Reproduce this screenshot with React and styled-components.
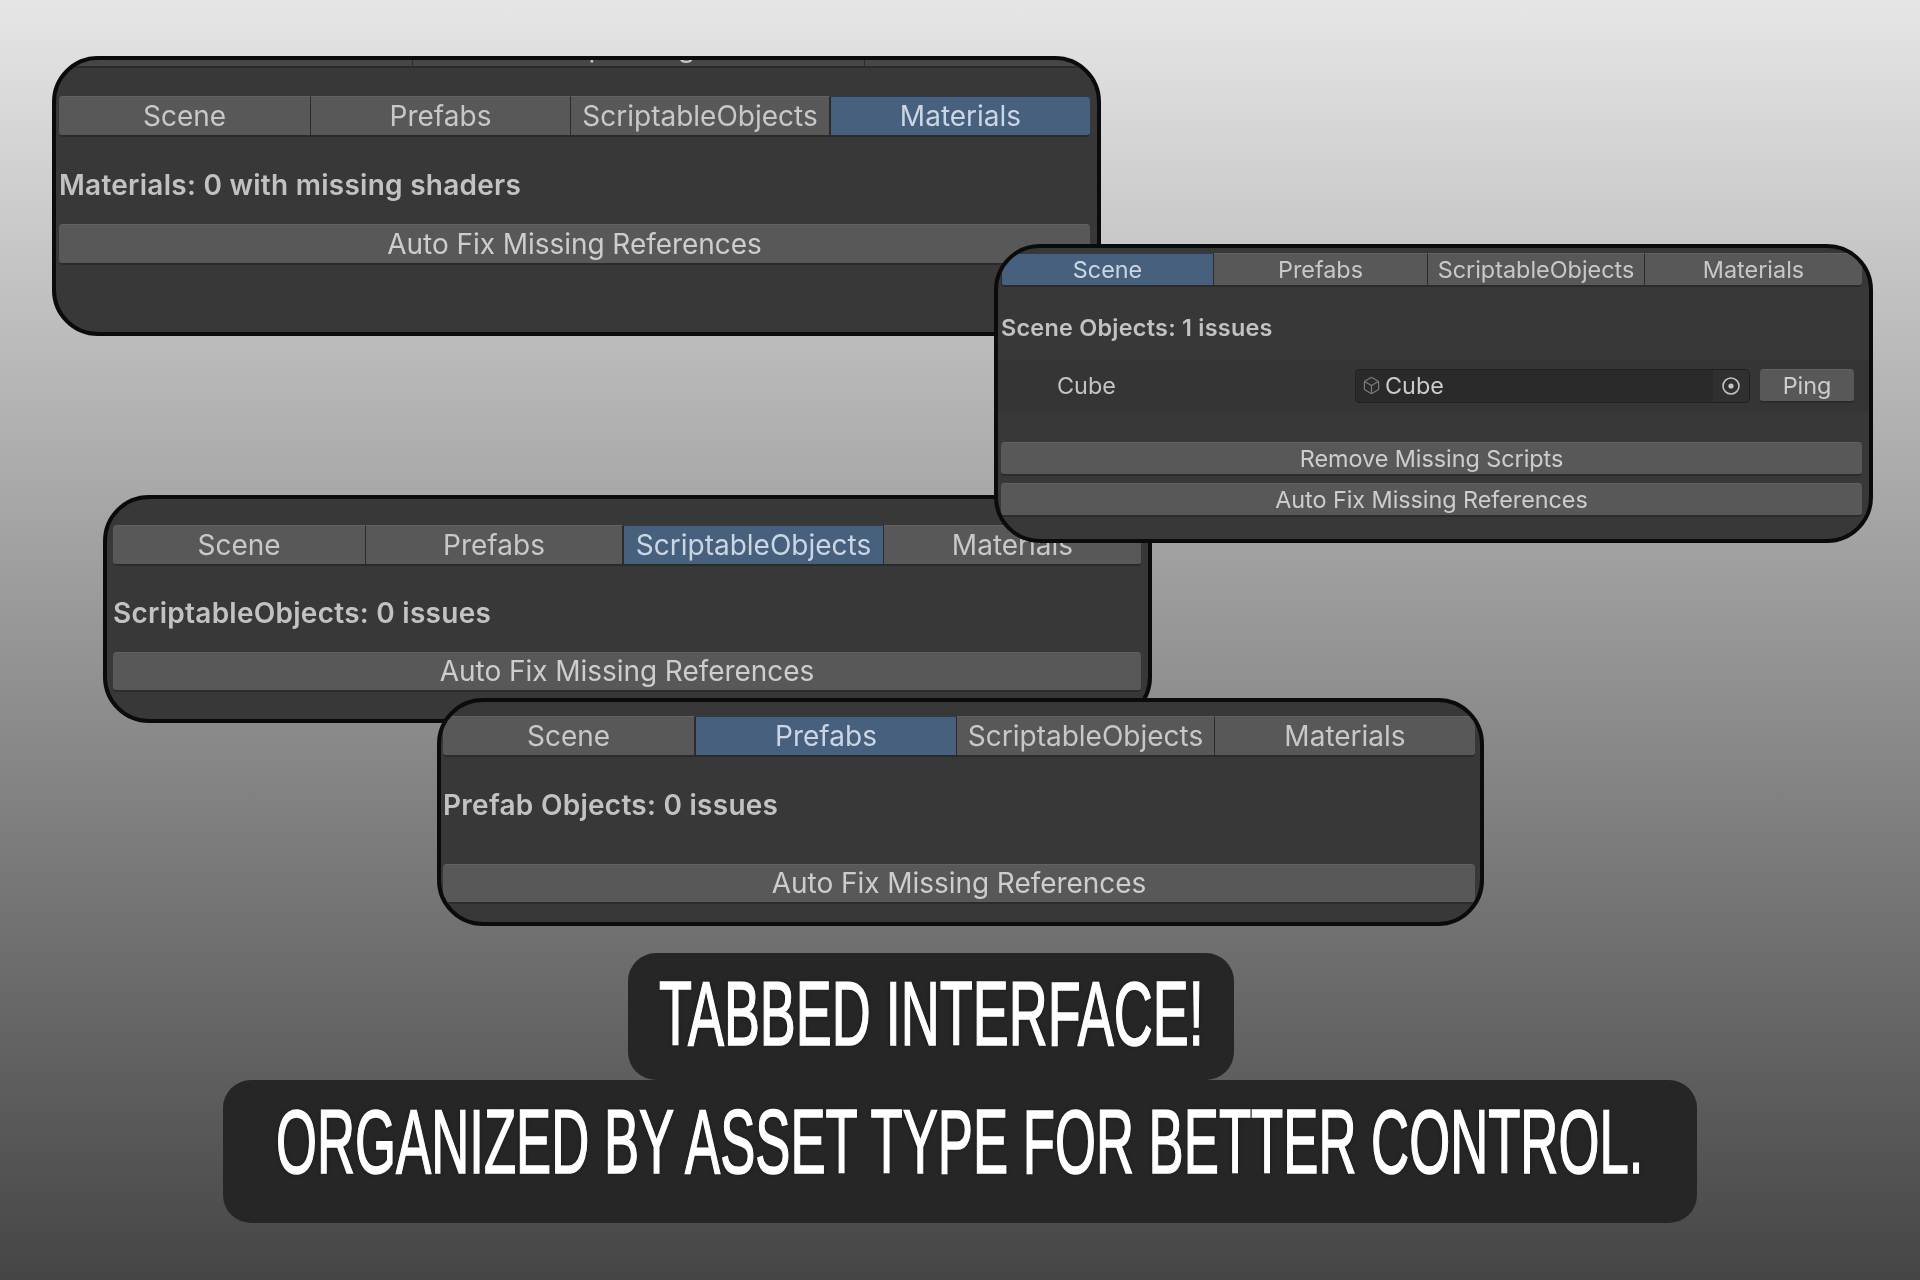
import React from 'react';
import styled, { createGlobalStyle } from 'styled-components';
import { Box } from 'lucide-react';

const GlobalStyle = createGlobalStyle`
  html, body { margin: 0; padding: 0; }
  body { font-family: Inter, "Liberation Sans", sans-serif; }
`;

const Page = styled.div`
  position: relative;
  width: 1920px;
  height: 1280px;
  overflow: hidden;
  box-sizing: border-box;
  padding-bottom: 57px;
  display: flex;
  flex-direction: column;
  justify-content: flex-end;
  align-items: center;
  background: linear-gradient(180deg, #e6e6e6 0%, #454545 100%);
`;

// floating editor windows, their place on the canvas is the content
const Panel = styled.section`
  position: absolute;
  left: ${(p) => p.$left}px;
  top: ${(p) => p.$top}px;
  width: ${(p) => p.$width}px;
  height: ${(p) => p.$height}px;
  z-index: ${(p) => p.$z};
  box-sizing: border-box;
  border: 4px solid #0b0b0b;
  border-radius: 46px;
  background: #383838;
  overflow: hidden;
  font-size: ${(p) => p.$font}px;
`;

const Inner = styled.div`
  display: flex;
  flex-direction: column;
  padding: ${(p) => p.$pad}px ${(p) => p.$right}px 0 ${(p) => p.$left}px;
  filter: blur(0.7px);
`;

const TabRow = styled.div`
  display: grid;
  grid-template-columns: ${(p) => p.$cols};
  height: ${(p) => p.$h}px;
  margin: ${(p) => p.$mt || 0}px 0 0;
  flex: none;
`;

const Tab = styled.div`
  display: flex;
  align-items: center;
  justify-content: center;
  color: ${(p) => (p.$active ? '#cbd6e2' : '#c8c8c8')};
  background: ${(p) => (p.$active ? '#46607e' : '#585858')};
  border: solid #2b2b2b;
  border-width: ${(p) => (p.$active ? '1px 1px 2px 1px' : '0 1px 2px 0')};
  border-top: 1px solid ${(p) => (p.$active ? '#2b3c52' : '#626262')};
  box-sizing: border-box;
  white-space: nowrap;
  &:first-child { border-radius: 4px 0 0 4px; }
  &:last-child { border-radius: 0 4px 4px 0; border-right: 0; }
`;

const StaleTab = styled(Tab)`
  background: #464646;
  border-top: 0;
`;

const Label = styled.div`
  color: #c2c2c2;
  font-weight: 600;
  line-height: 1.2;
  letter-spacing: 0.26px;
  margin-top: ${(p) => p.$mt}px;
  white-space: nowrap;
`;

const Action = styled.div`
  display: flex;
  align-items: center;
  justify-content: center;
  height: ${(p) => p.$h}px;
  margin-top: ${(p) => p.$mt}px;
  flex: none;
  box-sizing: border-box;
  color: #cdcdcd;
  background: #585858;
  border-top: 1px solid #626262;
  border-bottom: 2px solid #2b2b2b;
  border-radius: 4px;
  white-space: nowrap;
  letter-spacing: -0.05px;
`;

const ObjectRow = styled.div`
  display: flex;
  align-items: center;
  height: 51px;
  margin: 18px -7px 0;
  padding: 0 12px 0 63px;
  background: #353535;
  color: #c4c4c4;
`;

const RowName = styled.span`
  width: 298px;
  flex: none;
`;

const ObjectField = styled.div`
  display: flex;
  align-items: center;
  width: 395px;
  height: 34px;
  box-sizing: border-box;
  background: #2a2a2a;
  border: 1px solid #212121;
  border-radius: 4px;
  color: #cbcbcb;
  padding-left: 6px;
`;

const FieldName = styled.span`
  flex: 1;
  margin-left: 4px;
`;

const Picker = styled.div`
  display: flex;
  align-items: center;
  justify-content: center;
  width: 36px;
  height: 100%;
  background: #303030;
  border-radius: 0 3px 3px 0;
`;

const Ping = styled(Action)`
  width: 94px;
  margin: 1px 0 0 10px;
`;

const Caption = styled.div`
  display: flex;
  justify-content: center;
  box-sizing: border-box;
  width: ${(p) => p.$width}px;
  height: ${(p) => p.$height}px;
  padding-top: ${(p) => p.$pad}px;
  margin-right: ${(p) => p.$shift || 0}px;
  background: #262626;
  border-radius: 28px;
  flex: none;
`;

const CaptionText = styled.span`
  display: inline-block;
  color: #fff;
  font-family: "Liberation Sans Narrow", "Liberation Sans", sans-serif;
  font-size: 91px;
  font-weight: 400;
  line-height: 93px;
  white-space: nowrap;
  transform: scaleX(${(p) => p.$squeeze});
  -webkit-text-stroke: 1.6px #fff;
  text-shadow: 0 0 6px rgba(0, 0, 0, 0.4);
`;

const tabNames = ['Scene', 'Prefabs', 'ScriptableObjects', 'Materials'];

const Tabs = ({ active, cols, h, mt }) => (
  <TabRow $cols={cols} $h={h} $mt={mt}>
    {tabNames.map((name) => (
      <Tab key={name} $active={name === active}>{name}</Tab>
    ))}
  </TabRow>
);

const Target = () => (
  <svg width="20" height="20" viewBox="0 0 20 20" fill="none">
    <circle cx="10" cy="10" r="8" stroke="#c4c4c4" strokeWidth="1.6" />
    <circle cx="10" cy="10" r="2.6" fill="#c4c4c4" />
  </svg>
);

const App = () => (
  <Page>
    <GlobalStyle />

    <Panel $left={52} $top={56} $width={1049} $height={280} $font={28} $z={1}>
      <Inner $pad={0} $left={3} $right={7}>
        <TabRow $cols="354px 452px 1fr" $h={41} $mt={-33}>
          <StaleTab />
          <StaleTab>Open Tags</StaleTab>
          <StaleTab />
        </TabRow>
        <Tabs active="Materials" cols="252px 260px 259px 1fr" h={41} mt={28} />
        <Label $mt={32}>Materials: 0 with missing shaders</Label>
        <Action $h={41} $mt={21}>Auto Fix Missing References</Action>
      </Inner>
    </Panel>

    <Panel $left={103} $top={495} $width={1049} $height={228} $font={28} $z={1}>
      <Inner $pad={26} $left={6} $right={7}>
        <Tabs active="ScriptableObjects" cols="253px 257px 261px 1fr" h={41} />
        <Label $mt={31}>ScriptableObjects: 0 issues</Label>
        <Action $h={40} $mt={21}>Auto Fix Missing References</Action>
      </Inner>
    </Panel>

    <Panel $left={994} $top={244} $width={879} $height={299} $font={23.4} $z={3}>
      <Inner $pad={5} $left={3} $right={7}>
        <Tabs active="Scene" cols="213px 214px 217px 1fr" h={34} />
        <Label $mt={27}>Scene Objects: 1 issues</Label>
        <ObjectRow>
          <RowName>Cube</RowName>
          <ObjectField>
            <Box size={19} color="#7c7c7c" strokeWidth={1.5} />
            <FieldName>Cube</FieldName>
            <Picker><Target /></Picker>
          </ObjectField>
          <Ping $h={34} $mt={0}>Ping</Ping>
        </ObjectRow>
        <Action $h={34} $mt={31}>Remove Missing Scripts</Action>
        <Action $h={34} $mt={7}>Auto Fix Missing References</Action>
      </Inner>
    </Panel>

    <Panel $left={437} $top={698} $width={1047} $height={228} $font={28} $z={2}>
      <Inner $pad={14} $left={2} $right={5}>
        <Tabs active="Prefabs" cols="252px 262px 258px 1fr" h={41} />
        <Label $mt={32}>Prefab Objects: 0 issues</Label>
        <Action $h={40} $mt={41}>Auto Fix Missing References</Action>
      </Inner>
    </Panel>

    <Caption $width={606} $height={127} $pad={14} $shift={58}>
      <CaptionText $squeeze={0.593}>TABBED INTERFACE!</CaptionText>
    </Caption>
    <Caption $width={1474} $height={143} $pad={15}>
      <CaptionText $squeeze={0.579}>ORGANIZED BY ASSET TYPE FOR BETTER CONTROL.</CaptionText>
    </Caption>
  </Page>
);

export default App;
